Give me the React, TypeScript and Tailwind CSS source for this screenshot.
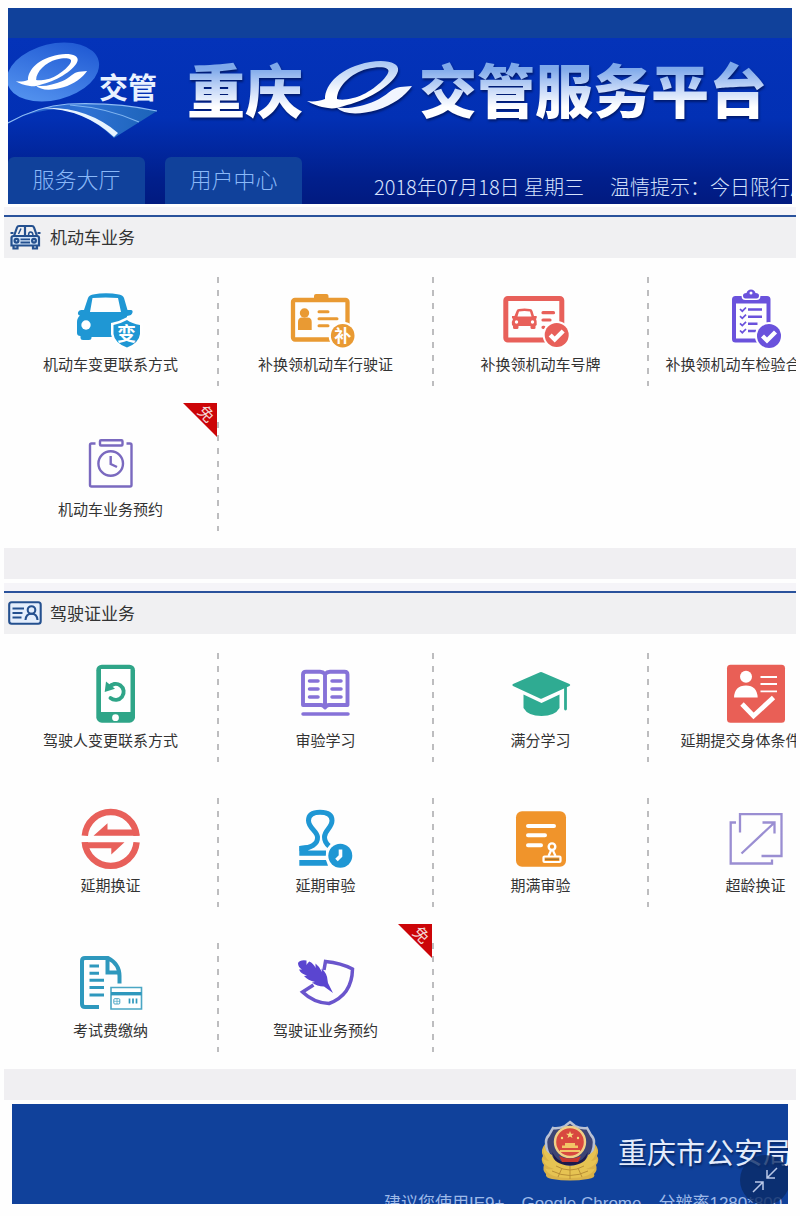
import type { ReactNode } from 'react';

const BLUE = '#1f97d4';
const ORANGE = '#e99a33';
const RED = '#e8605a';
const VIOLET = '#6a52dc';
const GREEN = '#2fa588';
const LILAC = '#8672d8';

const E_LOOP =
	'M4 43C10 44 17 43 22 41C22 26 38 9 67 4C84 1 97 5 95 13C92 25 66 42 44 47C35 50 30 51 25 50C17 49 9 46 4 43ZM34 41C34 29 48 15 64 11C77 8 88 9 85 15C81 24 62 38 50 40C43 42 37 42 34 41Z';
const E_BOWL = 'M33 49C44 52 60 48 72 43C84 38 88 30 97 29L109 28C102 38 90 47 74 52C56 57 41 57 33 49Z';

function Icon({ children }: { children: ReactNode }) {
	return (
		<svg viewBox="0 0 80 64" className="h-16 w-20" fill="none" aria-hidden="true">
			{children}
		</svg>
	);
}

function CheckBadge({ x, y, color }: { x: number; y: number; color: string }) {
	return (
		<g>
			<circle cx={x} cy={y} r="14" fill="#fff" />
			<circle cx={x} cy={y} r="12" fill={color} />
			<path d={`M${x - 6.5} ${y}l4.5 4.5l8.5 -8.5`} stroke="#fff" strokeWidth="4.300" />
		</g>
	);
}

function CarChangeIcon() {
	return (
		<Icon>
			<path
				fillRule="evenodd"
				fill={BLUE}
				d="M17 12Q18 9 22 8.500Q35 6 48 8.500Q52 9 53 12L56.500 24H60Q62 24 61.500 26.500Q61 29.500 56 30V51H20.500V52Q20.500 54 18 54H12Q9.500 54 9.500 52V50Q6 50 6 47V36Q6 32 9 29.500Q6.500 29 7 26.500Q7.500 24 10 24H13ZM21.500 12L19 26H50L47 12Q35 11 21.500 12Z"
			/>
			<circle cx="15" cy="39" r="4.700" fill="#fff" />
			<path
				d="M56 34Q61 37.500 69 39V48Q68 57 56 61.500Q43.500 57 42.500 48V39Q50 37.500 56 34Z"
				fill={BLUE}
				stroke="#fff"
				strokeWidth="5"
				paintOrder="stroke"
			/>
			<text x="55.500" y="54.500" textAnchor="middle" fontSize="19" fontWeight="700" fill="#fff">
				变
			</text>
		</Icon>
	);
}

function LicenceReplaceIcon() {
	return (
		<Icon>
			<rect x="7" y="14" width="54.500" height="39.500" rx="2" stroke={ORANGE} strokeWidth="4.300" />
			<path d="M28 16V10Q28 8 30 8H40.500Q42.500 8 42.500 10V16Z" fill={ORANGE} />
			<circle cx="18.500" cy="27" r="4.700" fill={ORANGE} />
			<path d="M12 44V36Q12 31.500 16 31.500H21.500Q25.700 31.500 25.700 36V44Z" fill={ORANGE} />
			<path d="M33 25.700H42M33 32.700H51M33 39.700H42" stroke={ORANGE} strokeWidth="3" strokeLinecap="round" />
			<circle cx="56.700" cy="49.700" r="14" fill="#fff" />
			<circle cx="56.700" cy="49.700" r="11.800" fill={ORANGE} />
			<text x="56.700" y="56" textAnchor="middle" fontSize="17" fontWeight="700" fill="#fff">
				补
			</text>
		</Icon>
	);
}

function PlateReplaceIcon() {
	return (
		<Icon>
			<rect x="4.800" y="12.500" width="56" height="41.500" rx="2" stroke={RED} strokeWidth="5" />
			<path
				fillRule="evenodd"
				fill={RED}
				d="M15.500 25Q16 23.200 18 23Q23.500 22 29 23Q31 23.200 31.500 25L33 30H35.700V32L35 33Q36 35 35.700 38V39L34.500 40V42Q34.500 43 33 43H31Q29.500 43 29.500 41.500V40H17.500V41.500Q17.500 43 16 43H13.500Q12 43 12 41.500V40L11 39Q10.500 35 12 33L11 32V30H13.500ZM18 25.500L16.500 30.500H30.500L29 25.500Q23.500 24.500 18 25.500Z"
			/>
			<circle cx="15.500" cy="36" r="1.700" fill="#fff" />
			<circle cx="31.500" cy="36" r="1.700" fill="#fff" />
			<path d="M42 26.700H52.500M42 34H49M42 41.300H43" stroke={RED} strokeWidth="3.200" strokeLinecap="round" />
			<CheckBadge x={55.7} y={49} color={RED} />
		</Icon>
	);
}

function InspectionIcon() {
	return (
		<Icon>
			<rect x="18" y="12" width="34.500" height="42.500" rx="1.500" stroke={VIOLET} strokeWidth="4" />
			<path d="M17 11H53.500V17.500H17Z" fill={VIOLET} />
			<path
				d="M27 9.500Q27 7 30.500 7Q31.500 3.500 35 3.500Q38.500 3.500 39.500 7Q43 7 43 9.500Q43 12.500 40.500 12.500H29.500Q27 12.500 27 9.500Z"
				fill={VIOLET}
				stroke="#fff"
				strokeWidth="3"
				paintOrder="stroke"
			/>
			<circle cx="35" cy="7" r="1.500" fill="#fff" />
			<path
				d="M24 23L26.300 25.200L30 21.500M24 30.200L26.300 32.400L30 28.700M24 37.300L26.300 39.500L30 35.800M24 44.500L26.300 46.700L30 43"
				stroke={VIOLET}
				strokeWidth="1.700"
			/>
			<path d="M32 23.500H46M32 30.700H46M32 37.800H41.500M32 45H40" stroke={VIOLET} strokeWidth="2.600" />
			<CheckBadge x={53} y={50} color={VIOLET} />
		</Icon>
	);
}

function ClockBoardIcon() {
	return (
		<Icon>
			<path
				d="M24.500 12.500H20.500Q19 12.500 19 14V54Q19 55.500 20.500 55.500H59Q60.500 55.500 60.500 54V14Q60.500 12.500 59 12.500H55.500"
				stroke="#7a69bf"
				strokeWidth="2.400"
			/>
			<rect x="29" y="9.300" width="22.500" height="5.200" rx="1" stroke="#7a69bf" strokeWidth="2.400" />
			<circle cx="39.700" cy="32.500" r="12.300" stroke="#7a69bf" strokeWidth="2.400" />
			<path d="M39.700 25V33L46 36" stroke="#7a69bf" strokeWidth="2.400" />
		</Icon>
	);
}

function PhoneIcon() {
	return (
		<Icon>
			<rect x="25.300" y="2.700" width="38.700" height="58" rx="5.500" fill={GREEN} />
			<path d="M30 7H59.500V50H30Z" fill="#fff" />
			<circle cx="44.500" cy="55.700" r="3.400" fill="#fff" />
			<path d="M38 25.500A8 8 0 1 1 39.500 36" stroke={GREEN} strokeWidth="3.900" strokeLinecap="round" />
			<path d="M35 19.500L33.700 30L44 26.700Z" fill={GREEN} />
		</Icon>
	);
}

function BookIcon() {
	return (
		<Icon>
			<path
				d="M39 12Q37 9.700 34 9.700H20Q17 9.700 17 12.500V43H35Q37.500 43 39 45.500Q40.500 43 43 43H61.500V12.500Q61.500 9.700 58.500 9.700H44Q41 9.700 39 12ZM39 12V45"
				stroke={LILAC}
				strokeWidth="3.900"
				strokeLinejoin="round"
			/>
			<path
				d="M23.500 19H32M23.500 27H32M23.500 35H32M46 19H55M46 27H55M46 35H55M17 52H62"
				stroke={LILAC}
				strokeWidth="3.500"
				strokeLinecap="round"
			/>
		</Icon>
	);
}

function CapIcon() {
	return (
		<Icon>
			<path
				d="M39 10.300Q40 9.800 41 10.300L68.500 22Q70 23 68.500 24L41 36.500Q40 37 39 36.500L12 24Q10.500 23 12 22Z"
				fill="#2fab92"
			/>
			<path d="M22.500 32.500L40.500 41L58.500 32.500V46Q54 54 40.500 54Q27 54 22.500 46Z" fill="#2fab92" />
			<path d="M64.500 25V47" stroke="#2fab92" strokeWidth="2.800" strokeLinecap="round" />
		</Icon>
	);
}

function BodyReportIcon() {
	return (
		<Icon>
			<rect x="11" y="2.700" width="58" height="58" rx="3.500" fill="#e95f56" />
			<circle cx="30" cy="14.700" r="6" fill="#fff" />
			<path d="M18 35.500Q18.500 23.500 30 23.500Q41 23.500 41.700 35.500Z" fill="#fff" />
			<path d="M44.500 15H61M44.500 22H61M44.500 29.300H61" stroke="#fff" strokeWidth="1.800" />
			<path d="M26 42L37.500 54L57.500 35.500" stroke="#fff" strokeWidth="4.800" />
		</Icon>
	);
}

function SwapIcon() {
	return (
		<Icon>
			<path d="M13.800 28.700A26 26 0 0 1 65.600 28.700M13.800 35.200A26 26 0 0 0 65.600 35.200" stroke={RED} strokeWidth="6.400" />
			<path d="M22.500 28.700L36.500 16.300V22.500H67L68.500 28.700Z" fill={RED} />
			<path d="M53.500 35.200L40.300 47.500V41.300H12L10.700 35.200Z" fill={RED} />
		</Icon>
	);
}

function StampIcon() {
	return (
		<Icon>
			<path
				d="M13.500 41.500C25 41.500 32 37 31.500 30C31 24 22.500 21 22.500 13.500C22.500 7.500 27 5.200 34 5.200C41.500 5.200 46 7.500 46 13.500C46 21 38.500 23 38.500 30C38.500 34 40 36.500 43 39"
				stroke={BLUE}
				strokeWidth="5"
			/>
			<path d="M13.300 39V48.700H40V43.500H22L30 37Z" fill={BLUE} />
			<path d="M13.300 53H40L42 58.700H13.300Z" fill={BLUE} />
			<circle cx="54.300" cy="48.700" r="14.500" fill="#fff" />
			<circle cx="54.300" cy="48.700" r="12" fill={BLUE} />
			<path d="M54.500 42.500V49L50.500 53" stroke="#fff" strokeWidth="3.600" />
		</Icon>
	);
}

function ExpiredReviewIcon() {
	return (
		<Icon>
			<rect x="15" y="4.200" width="50" height="55.500" rx="6" fill="#f0942b" />
			<path d="M27 19H53M27 28.300H44M27 38.300H40" stroke="#fff" strokeWidth="4" strokeLinecap="round" />
			<circle cx="51" cy="39.700" r="3.300" stroke="#fff" strokeWidth="2.400" />
			<path d="M50 43.500L47.500 49M52 43.500L54.500 49" stroke="#fff" strokeWidth="2.200" />
			<rect x="42.500" y="49.500" width="17" height="5.500" rx="1" stroke="#fff" strokeWidth="2.200" />
			<path d="M44 52.300H58" stroke="#a8762c" strokeWidth="1.400" />
		</Icon>
	);
}

function EnlargeIcon() {
	return (
		<Icon>
			<path
				d="M24 25.500V7.200H65.500V49H45.500M20 15.500H14.700V56.500H56V52.500M25.500 46.500L58 16M46.500 15.500H58.500V26.500"
				stroke="#9a8ed2"
				strokeWidth="2.300"
			/>
		</Icon>
	);
}

function FeeIcon() {
	return (
		<Icon>
			<path
				d="M28 55H14Q11 55 11 52V9Q11 6 14 6H37Q48.500 12 48.500 24V31.500M36.500 6V20.500H48.500"
				stroke="#2e98bd"
				strokeWidth="4"
			/>
			<path d="M18.500 14H28M18.500 21.300H28M18.500 28.300H33M18.500 35.600H33M18.500 43H33" stroke="#2e98bd" strokeWidth="3" />
			<path d="M40 35.500H70.500V57H40Z" fill="#fff" stroke="#4aa6c4" strokeWidth="1.600" />
			<path d="M40 41.700H70.500" stroke="#2e98bd" strokeWidth="3.400" />
			<rect x="42.800" y="46.700" width="6" height="5.300" rx="1" stroke="#4aa6c4" />
			<path d="M43 49.300H49M46 47V52" stroke="#4aa6c4" strokeWidth="0.700" />
			<path d="M58.500 46.500V51.500M62 46.500V51.500M65.500 46.500V51.500" stroke="#2e98bd" strokeWidth="1.700" />
		</Icon>
	);
}

function QuillIcon() {
	return (
		<Icon>
			<path
				d="M27.500 33L16.500 40Q28 51 43 51.500Q66 43 66.500 17Q55 11 39.500 9.500L38 18"
				stroke="#6a55cc"
				strokeWidth="3.500"
			/>
			<path
				d="M12 11Q14 7.500 20.500 8.500L20.500 13Q22 10 23.500 9.500Q28 12 29.500 16L29.500 11.500Q34 15 36 20L35.500 16.500Q41 21 41.500 28L42 31L47 41L38 34.500Q31 34.500 26 30.500L29 30Q22 28.500 18 24L21 23.500Q15 22 13 17.500L16 17.500Q12 15 12 11Z"
				fill="#5a45d0"
			/>
		</Icon>
	);
}

function CarOutlineIcon() {
	return (
		<svg viewBox="0 0 32 26" className="h-[26px] w-8" fill="none" stroke="#24508f" strokeWidth="2.200" aria-hidden="true">
			<path d="M5 12L8 3.500Q8.500 2 10 2H23Q24.500 2 25 3.500L28 12" />
			<path d="M2.500 14Q2.500 12 4.500 12H28Q30 12 30 14V21.500H2.500ZM1.500 9H4.500M28.500 9H31.500" fill="#d5e6fa" />
			<path d="M4.500 21.500V24.500H8.500V21.500M24 21.500V24.500H28V21.500M16 2V11.500" />
			<path d="M19.500 11.500Q19.500 8 21.500 8Q24 8 24 11.500M12 4.500L9.500 10" strokeWidth="1.500" />
			<circle cx="7.500" cy="16.700" r="1.900" />
			<circle cx="25" cy="16.700" r="1.900" />
			<path d="M11.500 15.300H21M11.500 18.500H21" strokeWidth="1.800" />
		</svg>
	);
}

function CardOutlineIcon() {
	return (
		<svg viewBox="0 0 34 24" className="h-6 w-[34px]" fill="none" stroke="#24508f" strokeWidth="2.100" aria-hidden="true">
			<rect x="1.200" y="1.200" width="31.500" height="21.600" rx="2.500" fill="#e4eefc" />
			<path d="M4.500 7.500H16M4.500 12H14.500M4.500 16.500H13.500" />
			<circle cx="23.500" cy="9" r="3.800" />
			<path d="M17.500 19Q18 12.800 23.500 12.800Q29 12.800 29.500 19" />
		</svg>
	);
}

function Logo() {
	return (
		<svg viewBox="0 0 152 104" className="h-[104px] w-[152px] shrink-0" role="img" aria-label="e交管">
			<defs>
				<linearGradient id="disc" x1="1" y1="0" x2="0" y2="1">
					<stop offset="0" stopColor="#1750cf" />
					<stop offset="1" stopColor="#5c9cf3" />
				</linearGradient>
				<linearGradient id="road" x1="0" y1="0" x2="1" y2="0">
					<stop offset="0" stopColor="#1d55c6" />
					<stop offset="0.5" stopColor="#2f72d4" />
					<stop offset="1" stopColor="#1c63b8" />
				</linearGradient>
			</defs>
			<ellipse cx="45" cy="34" rx="47" ry="28" transform="rotate(-14 45 34)" fill="url(#disc)" />
			<g transform="translate(5 14) scale(0.68)" fill="#fff">
				<path d={E_LOOP} fillRule="evenodd" />
				<path d={E_BOWL} />
			</g>
			<path d="M0 85Q30 68 60 66Q108 64 149 73L106 100Q72 68 40 72Q18 75 0 85Z" fill="url(#road)" />
			<path d="M0 85Q30 68 60 66Q108 64 149 73" stroke="#8fbdf5" strokeWidth="1.200" fill="none" />
			<path d="M62 67Q100 70 131 84" stroke="#7fb4f0" strokeWidth="1.200" fill="none" />
			<path d="M34 70Q78 68 110 95L106 99Q76 71 34 70Z" fill="#e8f4ff" />
			<text x="91" y="61" fontSize="29" fontWeight="700" fill="#e9f2ff">
				交管
			</text>
		</svg>
	);
}

function PoliceBadge() {
	return (
		<svg viewBox="0 0 60 62" className="h-[62px] w-[60px] shrink-0" role="img" aria-label="警徽">
			<path
				d="M5 24Q0 30 3 36Q0 40 4 45Q2 50 6 54Q5 58 12 59Q30 62 48 59Q56 58 54 54Q58 50 56 45Q60 40 57 36Q60 30 55 24Z"
				fill="#d9b24a"
			/>
			<path
				d="M30 2L35 6Q41 9 47 8L51 15Q54 18 54 22Q54 42 30 51Q6 42 6 22Q6 18 9 15L13 8Q19 9 25 6Z"
				fill="#3d4474"
				stroke="#b9c1d4"
				strokeWidth="2.500"
			/>
			<path d="M12 32Q20 46 30 40Q40 46 48 32L44 45H16Z" fill="#1d1a4c" />
			<path
				d="M12 35Q6 32 4 27Q2 34 9 41Q3 40 3 38Q3 46 14 49Q6 50 5 48Q8 58 30 58Q52 58 55 48Q54 50 46 49Q57 46 57 38Q57 40 51 41Q58 34 56 27Q54 32 48 35Q46 44 30 46Q14 44 12 35Z"
				fill="#e6c352"
			/>
			<path d="M16 46Q30 54 44 46M12 51Q30 60 48 51M30 46V59M22 48L18 57M38 48L42 57" stroke="#b98f35" fill="none" />
			<circle cx="30" cy="22" r="15" fill="#d8483f" stroke="#f0cf86" strokeWidth="2.400" />
			<path d="M30 11L31 13.700H34L31.600 15.400L32.500 18L30 16.400L27.500 18L28.400 15.400L26 13.700H29Z" fill="#f7dc7c" />
			<path d="M22 28V25.500H25V23H35V25.500H38V28ZM20 30H40V32H20Z" fill="#f2c566" />
			<circle cx="22" cy="18" r="1.200" fill="#f7dc7c" />
			<circle cx="38" cy="18" r="1.200" fill="#f7dc7c" />
			<path d="M19 36Q30 41 41 36L38 42H22Z" fill="#c5362f" />
		</svg>
	);
}

interface Service {
	label: string;
	icon: ReactNode;
	free?: boolean;
}

const vehicleServices: Service[] = [
	{ label: '机动车变更联系方式', icon: <CarChangeIcon /> },
	{ label: '补换领机动车行驶证', icon: <LicenceReplaceIcon /> },
	{ label: '补换领机动车号牌', icon: <PlateReplaceIcon /> },
	{ label: '补换领机动车检验合格标志', icon: <InspectionIcon /> },
	{ label: '机动车业务预约', icon: <ClockBoardIcon />, free: true },
];

const licenceServices: Service[] = [
	{ label: '驾驶人变更联系方式', icon: <PhoneIcon /> },
	{ label: '审验学习', icon: <BookIcon /> },
	{ label: '满分学习', icon: <CapIcon /> },
	{ label: '延期提交身体条件证明', icon: <BodyReportIcon /> },
	{ label: '延期换证', icon: <SwapIcon /> },
	{ label: '延期审验', icon: <StampIcon /> },
	{ label: '期满审验', icon: <ExpiredReviewIcon /> },
	{ label: '超龄换证', icon: <EnlargeIcon /> },
	{ label: '考试费缴纳', icon: <FeeIcon /> },
	{ label: '驾驶证业务预约', icon: <QuillIcon />, free: true },
];

function FreeCorner() {
	return (
		<span className="absolute top-0 right-0.5 flex size-[34px] items-start justify-end bg-[#cc0508] text-base leading-5 text-[#f3d5d5] [clip-path:polygon(0_0,100%_0,100%_100%)]">
			<span className="rotate-45 px-0.5">免</span>
		</span>
	);
}

function ServiceCell({ label, icon, free }: Service) {
	return (
		<li className="relative flex h-[145px]">
			<a href="#" className="flex flex-1 flex-col items-center pt-7">
				{icon}
				<span className="mt-0.5 text-[15px] leading-6 whitespace-nowrap text-[#333]">{label}</span>
			</a>
			<span className="mt-[19px] h-[109px] w-0.5 bg-[repeating-linear-gradient(to_bottom,#bdbdbf_0px,#bdbdbf_6px,transparent_6px,transparent_13px)]" />
			{free && <FreeCorner />}
		</li>
	);
}

function ServiceSection({ title, icon, services }: { title: string; icon: ReactNode; services: Service[] }) {
	return (
		<section className="mx-1 mb-1 overflow-hidden">
			<div className="h-2 bg-[#f5f4f8]" />
			<h2 className="flex h-[43px] items-center gap-2 border-t-2 border-[#2a529c] bg-[#f0f0f2] pb-0.5 pl-1 text-[17px] text-[#333]">
				<span className="flex w-[34px] justify-center">{icon}</span>
				{title}
			</h2>
			<ul className="grid grid-cols-[repeat(4,215px)]">
				{services.map((service) => (
					<ServiceCell key={service.label} {...service} />
				))}
			</ul>
			<div className="h-[31px] bg-[#f0eff2]" />
		</section>
	);
}

function Header() {
	return (
		<header className="mx-2 mb-[3px] overflow-hidden bg-[linear-gradient(to_bottom,#0433b9_30px,#0230b4_110px,#011f8c_170px,#011a80)]">
			<div className="h-[30px] bg-[#10419b]" />
			<div className="flex h-[104px] items-center">
				<Logo />
				<h1 className="ml-[27px] flex shrink-0 items-center pb-1 text-[58px] leading-[64px] font-black whitespace-nowrap drop-shadow-[1px_2px_1px_#001a6e]">
					<span className="bg-linear-to-b from-[#7fa9ea] from-20% via-[#c3d6f7] via-50% to-white to-80% bg-clip-text text-transparent">
						重庆
					</span>
					<svg viewBox="0 0 116 60" className="h-[60px] w-[116px]" role="img" aria-label="e">
						<defs>
							<linearGradient id="steel" x1="0" y1="0" x2="0" y2="1">
								<stop offset="0" stopColor="#a8c6f3" />
								<stop offset="0.7" stopColor="#fff" />
							</linearGradient>
						</defs>
						<path d={E_LOOP} fill="url(#steel)" fillRule="evenodd" />
						<path d={E_BOWL} fill="#f1f5fe" />
					</svg>
					<span className="bg-linear-to-b from-[#7fa9ea] from-20% via-[#c3d6f7] via-50% to-white to-80% bg-clip-text text-transparent">
						交管服务平台
					</span>
				</h1>
			</div>
			<div className="mt-[15px] flex h-[47px] whitespace-nowrap">
				<nav className="flex shrink-0 gap-5 text-[22px] font-light text-[#8ab8f8]">
					<button type="button" className="w-[137px] rounded-t-md bg-[#10419b] pb-1">
						服务大厅
					</button>
					<button type="button" className="w-[137px] rounded-t-md bg-[#10419b] pb-1">
						用户中心
					</button>
				</nav>
				<p className="ml-[72px] flex gap-[26px] pt-4 text-xl leading-7 font-light text-[#d6e2fc]">
					<span>2018年07月18日 星期三</span>
					<span>温情提示：今日限行尾号</span>
				</p>
			</div>
		</header>
	);
}

function Footer() {
	return (
		<footer className="relative mx-3 h-[100px] overflow-hidden bg-[#10419b] whitespace-nowrap">
			<div className="flex items-center justify-end gap-[18px] pt-4">
				<PoliceBadge />
				<span className="w-[170px] text-[29px] leading-10 text-[#e3ebfb] [text-shadow:1px_2px_2px_#06245f]">重庆市公安局</span>
			</div>
			<p className="flex justify-end pt-2.5 font-['Liberation_Sans','Noto_Sans_CJK_SC',sans-serif] text-[17px] leading-6 text-[#9db9e8]">
				<span className="w-[404px]">建议您使用IE9+、Google Chrome、分辨率1280*800</span>
			</p>
			<button
				type="button"
				aria-label="退出全屏"
				className="absolute right-[-2px] bottom-[-1px] flex size-[50px] items-center justify-center rounded-full bg-[#0a2a66]/80"
			>
				<svg viewBox="0 0 28 28" className="size-7" fill="none" stroke="#b9c8e8" strokeWidth="1.500">
					<path d="M26 2L16 12M16 4V12H24M2 26L12 16M4 16H12V24" />
				</svg>
			</button>
		</footer>
	);
}

export default function App() {
	return (
		<div className="overflow-hidden bg-[#fefefe] pt-2 pb-3 font-['Noto_Sans_CJK_SC',sans-serif]">
			<Header />
			<main>
				<ServiceSection title="机动车业务" icon={<CarOutlineIcon />} services={vehicleServices} />
				<ServiceSection title="驾驶证业务" icon={<CardOutlineIcon />} services={licenceServices} />
			</main>
			<Footer />
		</div>
	);
}
